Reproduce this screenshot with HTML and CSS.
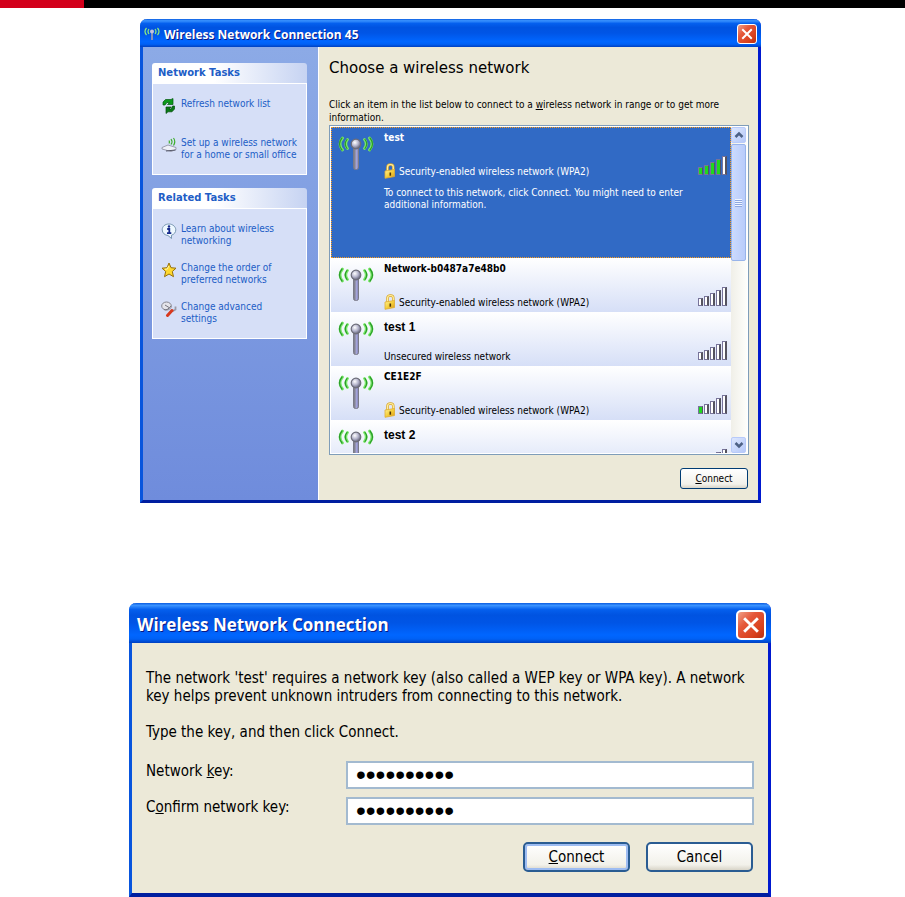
FILE: index.html
```
<!DOCTYPE html>
<html lang="en">

<head>
    <meta charset="UTF-8">
    <meta name="viewport" content="width=device-width, initial-scale=1.0">
    <title>Wireless Network Connection</title>
    <link rel="stylesheet" href="styles.css">
</head>

<body>

    <!-- Shared icons -->
    <svg class="sprite" width="0" height="0" aria-hidden="true">
        <defs>
            <linearGradient id="stem" x1="0" x2="1" y1="0" y2="0">
                <stop offset="0" stop-color="#6d6d80"></stop>
                <stop offset=".3" stop-color="#8e8e9c"></stop>
                <stop offset=".7" stop-color="#a9a9ee"></stop>
                <stop offset="1" stop-color="#666674"></stop>
            </linearGradient>
            <radialGradient id="ball" cx=".38" cy=".35" r=".65">
                <stop offset="0" stop-color="#ffffff"></stop>
                <stop offset=".55" stop-color="#b4b4cc"></stop>
                <stop offset="1" stop-color="#66667a"></stop>
            </radialGradient>
            <linearGradient id="gold" x1="0" x2="1" y1="0" y2="1">
                <stop offset="0" stop-color="#fff6a0"></stop>
                <stop offset=".5" stop-color="#f5cf3c"></stop>
                <stop offset="1" stop-color="#d99a1a"></stop>
            </linearGradient>
        </defs>
        <symbol id="antenna" viewBox="0 0 36 36">
            <g fill="none" stroke-linecap="round">
                <g stroke="#7be86a" stroke-width="2.800">
                    <path d="M4.500 3Q-.5 9 4.500 15M9.500 4.500Q6 9 9.500 13.500"></path>
                    <path d="M31.500 3Q36.500 9 31.500 15M26.500 4.500Q30 9 26.500 13.500"></path>
                </g>
                <g stroke="#2a9c2a" stroke-width="1.200">
                    <path d="M4 3Q-1 9 4 15M9 4.500Q5.500 9 9 13.500"></path>
                    <path d="M32 3Q37 9 32 15M27 4.500Q30.500 9 27 13.500"></path>
                </g>
            </g>
            <rect x="15.500" y="12" width="5" height="22.500" rx="2" fill="url(#stem)" stroke="#7a7a88" stroke-width="1"></rect>
            <circle cx="18" cy="9" r="4.800" fill="url(#ball)" stroke="#6c6c78" stroke-width="1.200"></circle>
        </symbol>
        <symbol id="lock" viewBox="0 0 12 16">
            <path d="M3.500 8V4.500Q3.500 1.500 6.500 1.500T9.300 4.500V7" fill="none" stroke="#d9a62c" stroke-width="2.600"></path>
            <path d="M3.500 8V4.500Q3.500 1.500 6.500 1.500T9.300 4.500V7" fill="none" stroke="#fff0a0" stroke-width="1.200"></path>
            <path d="M1 8L10.500 6.500V13.500L1 15.300Z" fill="url(#gold)" stroke="#e0ac30" stroke-width=".8"></path>
            <path d="M6.300 9.500V12.700" stroke="#4a3208" stroke-width="1.600"></path>
        </symbol>
        <symbol id="close" viewBox="0 0 20 20">
            <path d="M5.500 5.500L14.500 14.500M14.500 5.500L5.500 14.500" stroke="#fff" stroke-width="2.200" stroke-linecap="square"></path>
        </symbol>
    </svg>

    <div class="page-bar"></div>

    <!-- Network list window -->
    <section class="window list-window">
        <header class="title-bar">
            <svg class="title-icon" viewBox="0 0 16 16">
                <g fill="none" stroke="#8ef07c" stroke-width="1.200">
                    <path d="M2.500 2Q-.5 5.500 2.500 9M5 3Q3 5.500 5 8M13.500 2Q16.500 5.500 13.500 9M11 3Q13 5.500 11 8"></path>
                </g>
                <path d="M8 6V14" stroke="#8890b8" stroke-width="2"></path>
                <circle cx="8" cy="5.500" r="2" fill="#c4c4dc"></circle>
            </svg>
            <h1 class="title">Wireless Network Connection 45</h1>
            <button class="close-button" aria-label="Close"><svg><use href="#close"></use></svg></button>
        </header>

        <div class="window-body">
            <aside class="sidebar">
                <div class="task-panel">
                    <h2>Network Tasks</h2>
                    <ul>
                        <li>
                            <svg viewBox="0 0 16 16">
                                <path d="M2 7V4L4.500 1.500H10L12 .5V6.500H6.500L8.500 4.500H6L4 7Z" fill="#0c9a1c" stroke="#055a10" stroke-width=".7"></path>
                                <path d="M13.500 8V11L11 13.800H7L5 15.500V9H10L8 11H10L11.500 8Z" fill="#087a16" stroke="#044a0c" stroke-width=".7"></path>
                            </svg>
                            <a href="#">Refresh network list</a>
                        </li>
                        <li>
                            <svg viewBox="0 0 16 16">
                                <path d="M1 10.500L7 8L15 10.500V12.500L10 14.500L1 12Z" fill="#eef0f8" stroke="#888a9c" stroke-width=".8"></path>
                                <path d="M5 14L14.500 13" stroke="#55586a"></path>
                                <path d="M10 2Q12 4.500 10 7.500M12.500 1Q15 4.500 12.500 8.500M8 3.500Q9 5 8 6.500" fill="none" stroke="#3fae2e" stroke-width="1.200"></path>
                            </svg>
                            <a href="#">Set up a wireless network<br>for a home or small office</a>
                        </li>
                    </ul>
                </div>

                <div class="task-panel">
                    <h2>Related Tasks</h2>
                    <ul>
                        <li>
                            <svg viewBox="0 0 16 16">
                                <path d="M8 1C4 1 1.200 3.500 1.200 6.800S4 12.300 7 12.500L10.500 15.500V12.200C13 11.500 14.800 9.500 14.800 6.800S12 1 8 1Z" fill="#eef8ff" stroke="#7896b0"></path>
                                <circle cx="8" cy="3.500" r="1.200" fill="#152a8c"></circle>
                                <path d="M6.200 6H8.300V10M6 10.200H10.300" fill="none" stroke="#152a8c" stroke-width="1.800"></path>
                            </svg>
                            <a href="#">Learn about wireless<br>networking</a>
                        </li>
                        <li>
                            <svg viewBox="0 0 16 16">
                                <path d="M8 1L10 5.700L15 6.200L11.300 9.500L12.500 14.700L8 12L3.500 14.700L4.700 9.500L1 6.200L6 5.700Z" fill="#ffd92e" stroke="#96700c" stroke-linejoin="round"></path>
                                <path d="M7.500 4L6.500 7L4 7.300" fill="none" stroke="#fff7b0"></path>
                            </svg>
                            <a href="#">Change the order of<br>preferred networks</a>
                        </li>
                        <li>
                            <svg viewBox="0 0 16 16">
                                <ellipse cx="5.500" cy="5" rx="4.800" ry="4" fill="#e4e4ea" stroke="#85858f"></ellipse>
                                <path d="M4 4L8 6.500M3 8.500Q6 10 10 5" fill="none" stroke="#75757f"></path>
                                <path d="M14.500 5.500V8.500L12 10L10 8.500" fill="none" stroke="#9a9aa6" stroke-width="1.800"></path>
                                <path d="M11 9.500L6.500 14.500" stroke="#d8391f" stroke-width="3" stroke-linecap="round"></path>
                            </svg>
                            <a href="#">Change advanced<br>settings</a>
                        </li>
                    </ul>
                </div>
            </aside>

            <main class="content">
                <h2>Choose a wireless network</h2>
                <p>Click an item in the list below to connect to a <u>w</u>ireless network in range or to get more<br>information.</p>

                <div class="list-box">
                    <ul class="networks">
                        <li class="network selected">
                            <svg class="antenna"><use href="#antenna"></use></svg>
                            <div class="info">
                                <h3>test</h3>
                                <p class="security"><svg><use href="#lock"></use></svg>Security-enabled wireless network (WPA2)</p>
                                <p class="hint">To connect to this network, click Connect. You might need to enter<br>additional information.</p>
                            </div>
                            <div class="signal"><i class="on"></i><i class="on"></i><i class="on"></i><i class="on"></i><i></i></div>
                        </li>
                        <li class="network">
                            <svg class="antenna"><use href="#antenna"></use></svg>
                            <div class="info">
                                <h3>Network-b0487a7e48b0</h3>
                                <p class="security"><svg><use href="#lock"></use></svg>Security-enabled wireless network (WPA2)</p>
                            </div>
                            <div class="signal"><i></i><i></i><i></i><i></i><i></i></div>
                        </li>
                        <li class="network">
                            <svg class="antenna"><use href="#antenna"></use></svg>
                            <div class="info">
                                <h3 class="renamed">test 1</h3>
                                <p class="security">Unsecured wireless network</p>
                            </div>
                            <div class="signal"><i></i><i></i><i></i><i></i><i></i></div>
                        </li>
                        <li class="network">
                            <svg class="antenna"><use href="#antenna"></use></svg>
                            <div class="info">
                                <h3>CE1E2F</h3>
                                <p class="security"><svg><use href="#lock"></use></svg>Security-enabled wireless network (WPA2)</p>
                            </div>
                            <div class="signal"><i class="on"></i><i></i><i></i><i></i><i></i></div>
                        </li>
                        <li class="network">
                            <svg class="antenna"><use href="#antenna"></use></svg>
                            <div class="info">
                                <h3 class="renamed">test 2</h3>
                            </div>
                            <div class="signal"><i></i><i></i><i></i><i></i><i></i></div>
                        </li>
                    </ul>
                    <div class="scrollbar">
                        <button aria-label="Scroll up"><svg viewBox="0 0 10 8"><path d="M1.500 6L5 2.500L8.500 6"></path></svg></button>
                        <div class="thumb"><span></span></div>
                        <button class="down" aria-label="Scroll down"><svg viewBox="0 0 10 8"><path d="M1.500 2L5 5.500L8.500 2"></path></svg></button>
                    </div>
                </div>

                <div class="actions">
                    <button class="xp-button"><u>C</u>onnect</button>
                </div>
            </main>
        </div>
    </section>

    <!-- Network key dialog -->
    <form class="window key-window">
        <header class="title-bar">
            <h1 class="title">Wireless Network Connection</h1>
            <button type="button" class="close-button" aria-label="Close"><svg><use href="#close"></use></svg></button>
        </header>
        <div class="key-body">
            <p>The network 'test' requires a network key (also called a WEP key or WPA key). A network<br>key helps prevent unknown intruders from connecting to this network.</p>
            <p>Type the key, and then click Connect.</p>
            <div class="field">
                <label for="key">Network <u>k</u>ey:</label>
                <input id="key" type="password" value="0123456789">
            </div>
            <div class="field">
                <label for="confirm">C<u>o</u>nfirm network key:</label>
                <input id="confirm" type="password" value="0123456789">
            </div>
            <div class="actions">
                <button type="button" class="xp-button default"><u>C</u>onnect</button>
                <button type="button" class="xp-button">Cancel</button>
            </div>
        </div>
    </form>

</body>

</html>
```
FILE: styles.css
```
* {
    box-sizing: border-box;
}

body {
    margin: 0;
    background: #fff;
    color: #000;
    font-family: "DejaVu Sans Condensed", "Noto Sans", sans-serif;
    font-size: 10px;
    line-height: 13px;
}

h1, h2, h3, p, ul {
    margin: 0;
    padding: 0;
}

ul {
    list-style: none;
}

button {
    padding: 0;
    font: inherit;
    color: #000;
}

.sprite {
    position: absolute;
}

.page-bar {
    height: 8px;
    background: linear-gradient(90deg, #d3001b 84px, #000 84px);
}

/* Window frame */
.window {
    display: flex;
    flex-direction: column;
    background: #ece9d8;
    border: solid;
    border-width: 0 3px 3px;
    border-color: #0831d9 #0019cf #001ea0 #0855dd;
    border-radius: 7px 7px 0 0;
}

.title-bar {
    display: flex;
    align-items: center;
    height: 28px;
    margin: 0 -3px;
    padding: 2px 4px 0;
    border-radius: 7px 7px 0 0;
    background: linear-gradient(#0a5be0 0, #3a93ff 6%, #0560ee 16%, #0053e1 30%, #0055e6 50%, #0066ff 80%, #0061f5 90%, #0040c0 100%);
}

.title-icon {
    width: 16px;
    height: 16px;
    margin-right: 4px;
}

.title {
    flex: 1;
    color: #fff;
    font-family: "Open Sans", sans-serif;
    font-size: 12px;
    font-weight: 700;
    text-shadow: 1px 1px #0a1883;
}

.close-button {
    width: 20px;
    height: 20px;
    border: 1px solid #fff;
    border-radius: 3px;
    background: linear-gradient(135deg, #f0a088 0, #e5583a 35%, #d8401c 75%, #b83010 100%);
}

.close-button svg {
    display: block;
    width: 100%;
    height: 100%;
}

/* Network list window */
.list-window {
    margin: 11px 144px 0 140px;
}

.window-body {
    display: flex;
}

.sidebar {
    width: 176px;
    padding: 16px 11px 0 9px;
    border-right: 1px solid #fff;
    background: linear-gradient(#8caae6, #6f8cdc);
}

.task-panel {
    margin-bottom: 13px;
}

.task-panel h2 {
    height: 20px;
    padding-left: 6px;
    border-radius: 3px 3px 0 0;
    background: linear-gradient(90deg, #fff 40%, #c6d3f2);
    color: #215dc6;
    font-family: "DejaVu Sans", sans-serif;
    font-size: 10px;
    line-height: 20px;
}

.task-panel ul {
    display: flex;
    flex-direction: column;
    gap: 15px;
    padding: 14px 4px 13px 8px;
    border: 1px solid #fff;
    background: #d6dff7;
}

.task-panel li {
    display: flex;
    gap: 4px;
    height: 24px;
    line-height: 12px;
}

.task-panel svg {
    width: 16px;
    height: 16px;
}

.task-panel a {
    color: #215dc6;
    text-decoration: none;
    white-space: nowrap;
}

.content {
    flex: 1;
    padding: 11px 9px 11px 10px;
}

.content h2 {
    margin-bottom: 20px;
    font-family: "DejaVu Sans", sans-serif;
    font-size: 15px;
    font-weight: 400;
    line-height: 20px;
}

.list-box {
    display: flex;
    height: 330px;
    margin-top: 1px;
    padding: 1px;
    border: 1px solid #7f9db9;
    background: #fff;
}

.networks {
    flex: 1;
    overflow: hidden;
}

.network {
    display: flex;
    height: 54px;
    padding: 8px 4px 0 7px;
    background: linear-gradient(#fff, #d6dff7);
}

.network.selected {
    height: 131px;
    background: #316ac5;
    color: #fff;
    outline: 1px dotted #ff9c1a;
    outline-offset: -1px;
}

.antenna {
    width: 36px;
    height: 36px;
    margin-right: 10px;
}

.info {
    flex: 1;
    margin-top: -4px;
    white-space: nowrap;
}

.info h3 {
    height: 32px;
    font-size: 10px;
    line-height: 14px;
}

.info .renamed {
    padding-top: 4px;
    font-family: "Liberation Sans", sans-serif;
    font-size: 12px;
}

.security {
    display: flex;
    align-items: center;
    height: 16px;
}

.security svg {
    width: 12px;
    height: 16px;
    margin-right: 3px;
}

.hint {
    margin-top: 8px;
    line-height: 12px;
}

/* Signal bars */
.signal {
    display: flex;
    align-items: flex-end;
    gap: 1px;
    height: 40px;
}

.signal i {
    width: 5px;
    height: 19px;
    border: 1px solid #77739a;
    border-right: 2px solid #55535f;
    background: #fff;
}

.signal i:nth-child(1) { height: 8px; }
.signal i:nth-child(2) { height: 10px; }
.signal i:nth-child(3) { height: 13px; }
.signal i:nth-child(4) { height: 16px; }

.signal .on {
    border-right-width: 1px;
    background: #1ed81e;
}

/* Scrollbar */
.scrollbar {
    display: flex;
    flex-direction: column;
    width: 16px;
    padding-right: 1px;
    background: linear-gradient(90deg, #f0efe8, #fefefb);
}

.scrollbar button {
    display: flex;
    align-items: center;
    justify-content: center;
    height: 16px;
    border: 1px solid #b8cafa;
    border-radius: 2px;
    background: linear-gradient(135deg, #dde7fe, #b5c8f8);
}

.scrollbar svg {
    width: 10px;
    height: 8px;
    fill: none;
    stroke: #4d6185;
    stroke-width: 2.5;
}

.thumb {
    display: flex;
    align-items: center;
    justify-content: center;
    height: 117px;
    margin-top: 1px;
    border: 1px solid #98b4ea;
    border-radius: 2px;
    background: linear-gradient(90deg, #cbdafe, #b9ccfa);
}

.thumb span {
    width: 7px;
    height: 8px;
    background: repeating-linear-gradient(#f0f5ff 0 1px, #8ca6e0 1px 2px);
}

.scrollbar .down {
    margin-top: auto;
}

/* Buttons */
.actions {
    display: flex;
    justify-content: flex-end;
    margin-top: 13px;
    padding-right: 1px;
}

.xp-button {
    width: 68px;
    height: 21px;
    border: 1px solid #003c74;
    border-radius: 3px;
    background: linear-gradient(#fff, #f2f1ea 80%, #d8d4c8);
}

/* Network key dialog */
.key-window {
    margin: 100px 134px 0 129px;
    border-bottom-width: 4px;
    font-size: 15px;
    line-height: 18px;
}

.key-window .title-bar {
    height: 40px;
    padding: 4px 5px 0 8px;
}

.key-window .title {
    font-size: 17px;
}

.key-window .close-button {
    width: 30px;
    height: 30px;
    border-width: 2px;
    border-radius: 5px;
}

.key-body {
    padding: 26px 14px 21px;
}

.key-body p {
    margin-bottom: 18px;
    white-space: nowrap;
}

.key-body p + p {
    margin-bottom: 20px;
}

.field {
    display: flex;
    align-items: flex-start;
    margin-bottom: 8px;
}

.field label {
    width: 200px;
    line-height: 20px;
}

.field input {
    flex: 1;
    min-width: 0;
    height: 28px;
    padding: 0 8px;
    border: 2px solid #a3bad0;
    background: #fff;
    color: #000;
    font-family: "Liberation Sans", sans-serif;
    font-size: 28px;
    line-height: 24px;
}

.key-window .actions {
    gap: 16px;
    margin-top: 17px;
}

.key-window .xp-button {
    width: 107px;
    height: 30px;
    border: 2px solid #2a5c92;
    border-radius: 5px;
}

.key-window .default {
    box-shadow: inset 0 0 0 2px #9dbcf2;
}
```
